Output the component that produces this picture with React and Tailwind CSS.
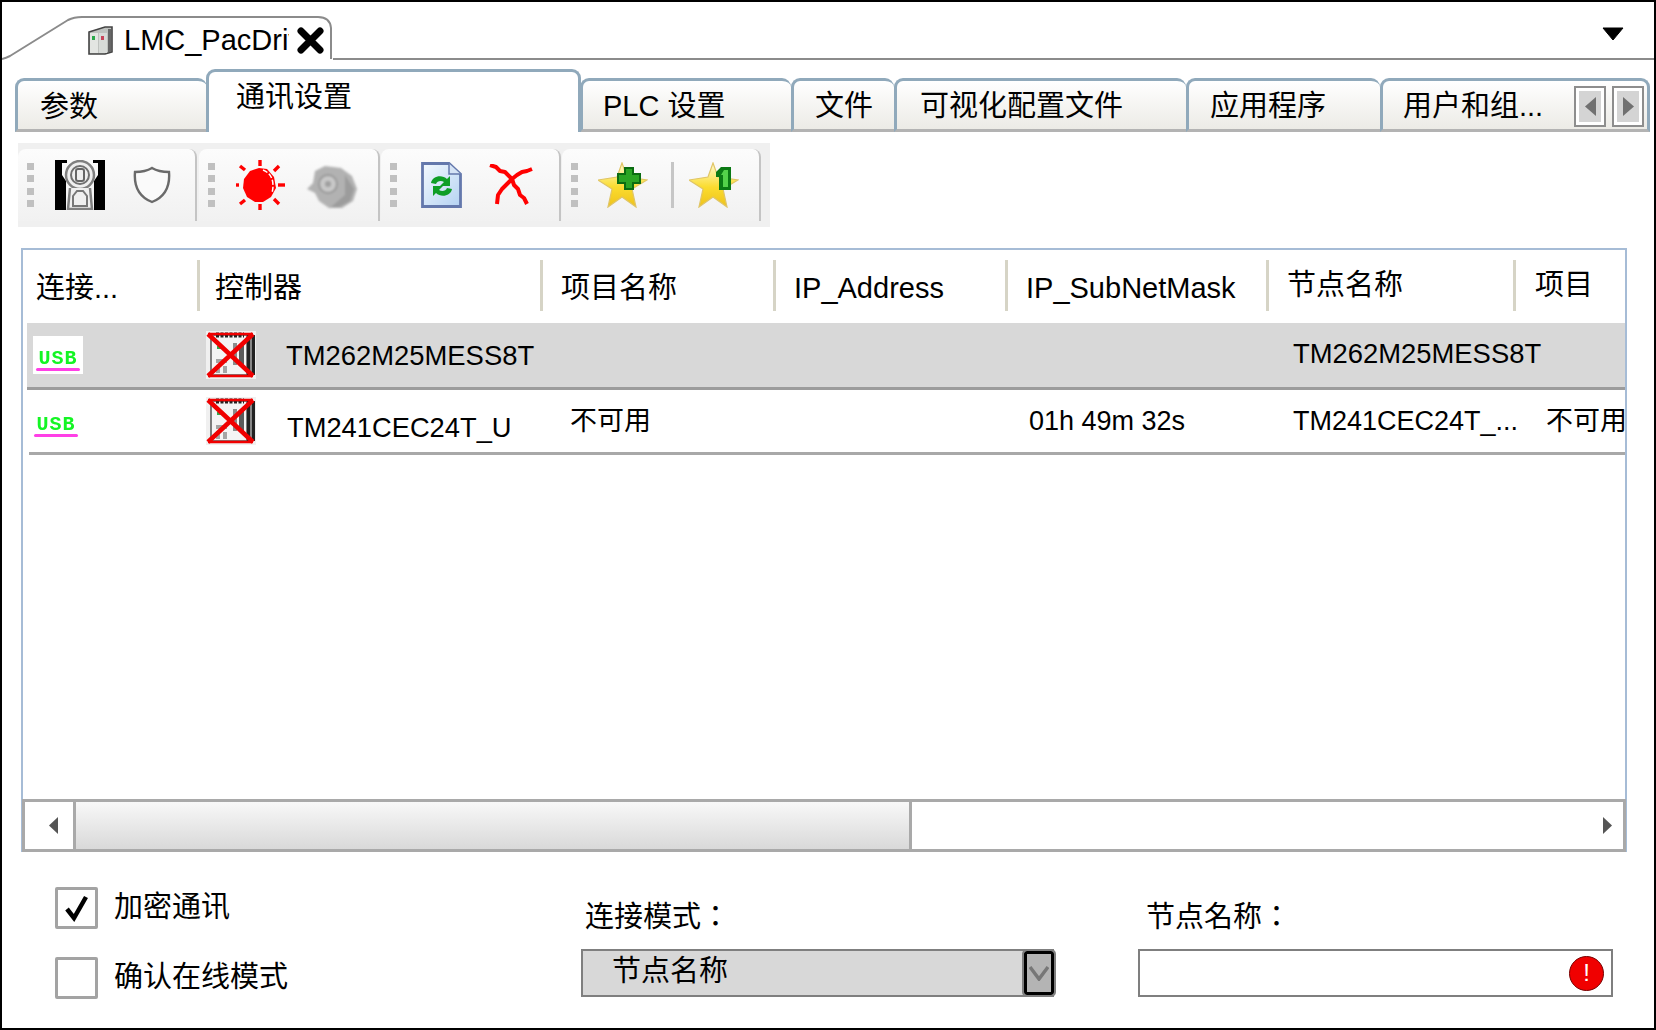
function DocTabIcon() {
  return (
    <svg width="26" height="29" viewBox="0 0 26 29" className="shrink-0 blur-[0.5px]">
      <path d="M2 6 L18 1 H25 V26 L18 28 H2 Z" fill="#bfc2bf" stroke="#444" strokeWidth="1.6" />
      <rect x="3" y="7" width="8" height="20" fill="#e3e5e2" />
      <rect x="12" y="7" width="8" height="20" fill="#d8dbd8" />
      <rect x="21" y="3" width="3" height="23" fill="#666" />
      <rect x="5" y="10" width="3" height="4" fill="#2aa84a" />
      <rect x="14" y="10" width="3" height="4" fill="#c8445a" />
    </svg>
  );
}

function CertIcon() {
  return (
    <svg width="50" height="50" viewBox="0 0 50 50" className="shrink-0 blur-[0.5px]">
      <path d="M0 0 H12 V3 H7 V15 L11 21 V50 H0 Z" fill="#000" />
      <path d="M50 0 H38 V3 H43 V15 L39 21 V50 H50 Z" fill="#000" />
      <circle cx="25" cy="15" r="14" fill="#efefef" stroke="#808080" strokeWidth="2.5" />
      <circle cx="25" cy="15" r="9" fill="none" stroke="#707070" strokeWidth="2" />
      <rect x="21" y="9" width="8" height="12" rx="2" fill="none" stroke="#666" strokeWidth="2" />
      <path d="M15 28 L13 49 H37 L35 28" fill="#efefef" stroke="#808080" strokeWidth="2.5" />
      <path d="M18 36 L22 31 H28 L32 36 V46 H18 Z" fill="none" stroke="#777" strokeWidth="2" />
    </svg>
  );
}

function ShieldIcon() {
  return (
    <svg width="38" height="38" viewBox="0 0 38 38" className="shrink-0 blur-[0.5px]">
      <path
        d="M19 2 C24 5 30 6 36 6 C37 18 34 30 19 36 C4 30 1 18 2 6 C8 6 14 5 19 2 Z"
        fill="#fafafa"
        stroke="#6a6a6a"
        strokeWidth="2.4"
      />
    </svg>
  );
}

function SunIcon() {
  const rays = [
    [25, 0, 25, 6],
    [25, 44, 25, 50],
    [1, 25, 4, 25],
    [43, 25, 50, 25],
    [5, 6, 10, 10],
    [44, 6, 39, 11],
    [5, 44, 10, 40],
    [44, 44, 39, 39],
  ];
  return (
    <svg width="50" height="50" viewBox="0 0 50 50" className="shrink-0 blur-[0.4px]">
      {rays.map((r, i) => (
        <line key={i} x1={r[0]} y1={r[1]} x2={r[2]} y2={r[3]} stroke="#ff0000" strokeWidth="3.4" />
      ))}
      <path d="M24 8 L32 9 L39 17 L41 28 L36 37 L28 42 L20 42 L12 37 L8 28 L9 19 L15 11 Z" fill="#ff0000" />
      <path d="M28 10 C36 13 40 21 37 33" fill="none" stroke="#fff" strokeWidth="1.5" strokeDasharray="5 2" />
    </svg>
  );
}

function GearIcon() {
  return (
    <svg width="50" height="44" viewBox="0 0 50 44" className="shrink-0 blur-[1px]">
      <path d="M0 24 L6 18 L8 6 L18 1 L34 3 L45 11 L50 24 L46 36 L35 43 L22 43 L12 36 L8 28 Z" fill="#b2b2b2" />
      <path d="M38 10 L47 24 L43 36 L32 42 L24 42 L38 30 Z" fill="#9c9c9c" />
      <circle cx="21" cy="19" r="9" fill="#c8c8c8" stroke="#9a9a9a" strokeWidth="2" />
      <circle cx="21" cy="19" r="3" fill="#a0a0a0" />
    </svg>
  );
}

function RefreshDocIcon() {
  return (
    <svg width="41" height="46" viewBox="0 0 41 46" className="shrink-0 blur-[0.5px]">
      <defs>
        <linearGradient id="docfill" x1="0" y1="0" x2="1" y2="1">
          <stop offset="0" stopColor="#f4f9fe" />
          <stop offset="1" stopColor="#b4d2f2" />
        </linearGradient>
      </defs>
      <path d="M1.5 1.5 H28 L39.5 12 V44.5 H1.5 Z" fill="url(#docfill)" stroke="#6478ac" strokeWidth="2.8" />
      <path d="M28 1.5 V12 H39.5" fill="#d5e3f5" stroke="#6478ac" strokeWidth="1.5" />
      <path d="M10 21 C11 14 21 12 26 17 L29 14 V24 H19 L23 20 C20 18 16 19 15 22 Z" fill="#0f9e26" />
      <path d="M31 27 C30 34 20 36 15 31 L12 34 V24 H22 L18 28 C21 30 25 29 26 26 Z" fill="#0f9e26" />
    </svg>
  );
}

function RedCrossIcon() {
  return (
    <svg width="44" height="42" viewBox="0 0 44 42" className="shrink-0 blur-[0.3px]">
      <path
        d="M1 1 L7 3 L11 7 L16 8 L23 15 L28 11 L33 8 L38 7 L43 5 M23 15 L25 21 L29 25 L31 31 L35 34 L38 40 M23 15 L18 20 L13 25 L9 31 L8 40"
        fill="none"
        stroke="#ff0000"
        strokeWidth="4"
        strokeLinejoin="round"
      />
    </svg>
  );
}

function StarIcon({ id, badge }) {
  return (
    <svg width="50" height="46" viewBox="0 0 50 46" className="shrink-0 blur-[0.6px]">
      <defs>
        <linearGradient id={id} x1="0" y1="0" x2="0" y2="1">
          <stop offset="0" stopColor="#fffbd6" />
          <stop offset="0.55" stopColor="#fbdc2e" />
          <stop offset="1" stopColor="#eec21c" />
        </linearGradient>
      </defs>
      <path
        d="M24 1 L29 15 L49 18 L34 27 L38 45 L24 35 L10 45 L14 27 L0 18 L19 15 Z"
        fill={`url(#${id})`}
        stroke="#e0c566"
        strokeWidth="1.2"
      />
      {badge === "plus" ? (
        <path
          d="M27 6 H35 V12 H42 V21 H35 V27 H27 V21 H20 V12 H27 Z"
          fill="#2aa524"
          stroke="#0b6c12"
          strokeWidth="2"
        />
      ) : (
        <g>
          <path d="M32 5 H42 V28 H30 V15 H27 V10 Z" fill="#0b7a14" />
          <path d="M35 8 H39 V25 H34 V13 H32 Z" fill="#54d24a" />
        </g>
      )}
    </svg>
  );
}

function Grip() {
  return (
    <div className="flex flex-col gap-[5.5px] shrink-0">
      <span className="block w-[7px] h-[7px] bg-[#c0c0c0]" />
      <span className="block w-[7px] h-[7px] bg-[#c0c0c0]" />
      <span className="block w-[7px] h-[7px] bg-[#c0c0c0]" />
      <span className="block w-[7px] h-[7px] bg-[#c0c0c0]" />
    </div>
  );
}

function UsbIcon({ boxed }) {
  return (
    <div className={boxed ? "w-[50px] h-[38px] bg-white flex flex-col items-center justify-end pb-[3px]" : "w-[50px] h-[38px] flex flex-col items-center justify-end pb-[3px]"}>
      <span className="[font-family:'Liberation_Mono',monospace] text-[20px] leading-[15px] font-bold text-[#14f524] tracking-[1px] blur-[0.3px]">
        USB
      </span>
      <span className="block w-[44px] h-[3px] mt-[2px] bg-[#ff3fe6] rounded-full" />
    </div>
  );
}

function PlcIcon() {
  return (
    <svg width="50" height="48" viewBox="0 0 50 48" className="shrink-0 blur-[0.5px]">
      <rect width="50" height="48" fill="#f0f0f0" />
      <rect x="5" y="4" width="36" height="40" fill="#f4f4f4" stroke="#555" strokeWidth="1.5" />
      <path d="M10 4 H38" stroke="#222" strokeWidth="5" strokeDasharray="3 1.5" />
      <rect x="41" y="4" width="3" height="40" fill="#222" />
      <rect x="44" y="4" width="2" height="40" fill="#888" />
      <rect x="46" y="4" width="3" height="40" fill="#222" />
      <rect x="11" y="15" width="6" height="3" fill="#35a84f" />
      <rect x="27" y="12" width="4" height="22" fill="#8c8c8c" />
      <rect x="33" y="14" width="5" height="20" fill="#5a5a5a" />
      <rect x="10" y="28" width="11" height="4" fill="#a5a5a5" />
      <rect x="10" y="35" width="4" height="7" fill="#a5a5a5" />
      <rect x="17" y="35" width="4" height="7" fill="#a5a5a5" />
      <path d="M2 3 L47 45 M2 45 L47 3" stroke="#f00000" strokeWidth="4.5" />
      <path d="M2 3 H47 M2 45 H47" stroke="#f00000" strokeWidth="2.5" />
    </svg>
  );
}

function Triangle({ dir, color, small }) {
  return (
    <svg width={small ? 9 : 11} height={small ? 17 : 19} viewBox="0 0 11 19" preserveAspectRatio="none">
      <path d={dir === "left" ? "M11 0 V19 L0 9.5 Z" : "M0 0 V19 L11 9.5 Z"} fill={color} />
    </svg>
  );
}

function Tab({ className, children }) {
  return (
    <div
      className={`h-[54px] shrink-0 flex items-center border-t-[3px] border-l-[3px] border-[#90a9bb] border-b-[3px] border-b-[#b3b3b3] rounded-t-[9px] bg-gradient-to-b from-white to-[#ecebe6] text-[29px] text-black whitespace-nowrap ${className}`}
    >
      {children}
    </div>
  );
}

export default function App() {
  return (
    <div className="[font-family:'Liberation_Sans','Noto_Sans_CJK_SC',sans-serif] w-[1656px] h-[1030px] box-border border-2 border-black bg-white flex flex-col overflow-hidden">
      {/* document tab strip */}
      <div className="flex h-[58px] shrink-0">
        <div className="relative w-[331px] h-[58px] shrink-0">
          <svg width="331" height="58" viewBox="0 0 331 58" className="absolute inset-0">
            <path
              d="M0 57 Q4 56 8 54 L66 18 Q72 15 80 15 H316 Q328 15 329 26 V57"
              fill="none"
              stroke="#8b8b8b"
              strokeWidth="2"
            />
          </svg>
          <div className="relative flex items-center h-full pl-[85px] pt-[18px]">
            <DocTabIcon />
            <span className="ml-[11px] w-[165px] overflow-hidden whitespace-nowrap text-[29px] leading-[34px]">LMC_PacDriver</span>
            <svg width="27" height="27" viewBox="0 0 27 27" className="ml-[8px] shrink-0">
              <path d="M4 4 L23 23 M23 4 L4 23" stroke="#000" strokeWidth="7" strokeLinecap="round" />
            </svg>
          </div>
        </div>
        <div className="flex-1 flex justify-end border-b-2 border-[#8b8b8b] pt-[25px] pr-[30px]">
          <svg width="22" height="14" viewBox="0 0 22 14">
            <path d="M1 1 H21 L11 13 Z" fill="#000" stroke="#000" strokeLinejoin="round" />
          </svg>
        </div>
      </div>

      {/* property tabs */}
      <div className="flex items-end ml-[13px] mt-[9px] h-[63px] shrink-0">
        <Tab className="w-[192px] pl-[22px] pt-[6px]">参数</Tab>
        <div className="relative z-10 -mx-[1px] w-[375px] h-[63px] shrink-0 border-t-[3px] border-x-[3px] border-[#90a9bb] rounded-t-[9px] bg-white pl-[27px] pt-[5px] text-[29px] leading-[40px]">
          通讯设置
        </div>
        <Tab className="w-[211px] pl-[20px] pt-[4px]">PLC 设置</Tab>
        <Tab className="w-[103px] pl-[21px] pt-[4px]">文件</Tab>
        <Tab className="w-[292px] pl-[23px] pt-[4px]">可视化配置文件</Tab>
        <Tab className="w-[194px] pl-[21px] pt-[4px]">应用程序</Tab>
        <Tab className="w-[270px] pl-[20px] pt-[2px] border-r-[3px]">
          <span className="pt-[2px]">用户和组...</span>
          <div className="ml-auto mr-[3px] flex gap-[6px]">
            <div className="w-[32px] h-[41px] border-2 border-[#8d8d8d] bg-white p-[3px]">
              <div className="w-full h-full bg-[#d4d4d4] flex items-center justify-center">
                <Triangle dir="left" color="#707070" />
              </div>
            </div>
            <div className="w-[32px] h-[41px] border-2 border-[#8d8d8d] bg-white p-[3px]">
              <div className="w-full h-full bg-[#d4d4d4] flex items-center justify-center">
                <Triangle dir="right" color="#707070" />
              </div>
            </div>
          </div>
        </Tab>
      </div>

      {/* toolbar */}
      <div className="flex ml-[16px] mt-[11px] w-[752px] h-[84px] shrink-0 bg-[#f0f0f0] pt-[6px] pb-[6px]">
        <div className="w-[179px] shrink-0 rounded-t-lg bg-gradient-to-b from-[#fcfcfc] to-[#f1f1f1] border-r-2 border-r-[#c4c4c4] flex items-center pl-[9px]">
          <Grip />
          <div className="ml-[21px]"><CertIcon /></div>
          <div className="ml-[28px]"><ShieldIcon /></div>
        </div>
        <div className="w-[181px] shrink-0 rounded-t-lg bg-gradient-to-b from-[#fcfcfc] to-[#f1f1f1] border-r-2 border-r-[#c4c4c4] flex items-center pl-[9px] ml-[2px]">
          <Grip />
          <div className="ml-[20px]"><SunIcon /></div>
          <div className="ml-[22px] mt-[4px]"><GearIcon /></div>
        </div>
        <div className="w-[180px] shrink-0 rounded-t-lg bg-gradient-to-b from-[#fcfcfc] to-[#f1f1f1] border-r-2 border-r-[#c4c4c4] flex items-center pl-[9px] ml-[1px]">
          <Grip />
          <div className="ml-[24px]"><RefreshDocIcon /></div>
          <div className="ml-[27px]"><RedCrossIcon /></div>
        </div>
        <div className="w-[199px] shrink-0 rounded-t-lg bg-gradient-to-b from-[#fcfcfc] to-[#f1f1f1] border-r-2 border-r-[#c4c4c4] flex items-center pl-[9px] ml-[1px]">
          <Grip />
          <div className="ml-[20px]"><StarIcon id="star-a" badge="plus" /></div>
          <span className="block ml-[23px] w-[3px] h-[46px] bg-[#c6c6c6]" />
          <div className="ml-[15px]"><StarIcon id="star-b" badge="one" /></div>
        </div>
      </div>

      {/* device table */}
      <div className="flex flex-col ml-[19px] mt-[21px] w-[1606px] h-[604px] shrink-0 border-2 border-[#a6bcd6] text-[29px]">
        <div className="flex shrink-0 h-[73px] pt-[10px]">
          <div className="w-[174px] h-[51px] flex items-center pl-[13px] pt-[6px]">连接...</div>
          <div className="w-[343px] h-[51px] flex items-center pl-[15px] pt-[6px] border-l-[3px] border-[#d6d4c6]">控制器</div>
          <div className="w-[233px] h-[51px] flex items-center pl-[18px] pt-[6px] border-l-[3px] border-[#d6d4c6]">项目名称</div>
          <div className="w-[232px] h-[51px] flex items-center pl-[18px] pt-[6px] border-l-[3px] border-[#d6d4c6]">IP_Address</div>
          <div className="w-[261px] h-[51px] flex items-center pl-[18px] pt-[6px] border-l-[3px] border-[#d6d4c6]">IP_SubNetMask</div>
          <div className="w-[247px] h-[51px] flex items-center pl-[18px] border-l-[3px] border-[#d6d4c6]">节点名称</div>
          <div className="w-[111px] h-[51px] flex items-center pl-[19px] border-l-[3px] border-[#d6d4c6] whitespace-nowrap">项目</div>
        </div>

        <div className="flex items-center shrink-0 h-[67px] ml-[4px] bg-[#d8d8d8] border-b-[3px] border-[#9c9c9c] text-[27.4px] whitespace-nowrap">
          <div className="w-[179px] shrink-0 pl-[6px]"><UsbIcon boxed /></div>
          <PlcIcon />
          <span className="ml-[30px] w-[1007px] shrink-0 pt-[2px]">TM262M25MESS8T</span>
          <span className="pb-[2px]">TM262M25MESS8T</span>
        </div>

        <div className="flex items-center shrink-0 h-[65px] ml-[6px] border-b-[3px] border-[#a8a8a8] text-[27px] whitespace-nowrap overflow-hidden">
          <div className="w-[177px] shrink-0 pl-[2px]"><UsbIcon /></div>
          <PlcIcon />
          <span className="ml-[31px] w-[283px] shrink-0 pt-[14px] text-[27.3px]">TM241CEC24T_U</span>
          <span className="w-[459px] shrink-0">不可用</span>
          <span className="w-[264px] shrink-0">01h 49m 32s</span>
          <span className="w-[253px] shrink-0">TM241CEC24T_...</span>
          <span>不可用</span>
        </div>

        {/* horizontal scrollbar */}
        <div className="mt-auto flex h-[53px] shrink-0 border-[3px] border-[#a9a9a9] -mb-[2px] -ml-[1px] -mr-[1px]">
          <div className="w-[48px] shrink-0 flex items-center justify-center bg-white pl-[8px]">
            <Triangle dir="left" color="#555" small />
          </div>
          <div className="w-[839px] shrink-0 border-x-[3px] border-[#a9a9a9] bg-gradient-to-b from-[#f8f8f8] to-[#d9d9d9]" />
          <div className="flex-1 flex items-center justify-end pr-[11px]">
            <Triangle dir="right" color="#555" small />
          </div>
        </div>
      </div>

      {/* bottom options */}
      <div className="flex flex-1 text-[29px]">
        <div className="w-[576px] shrink-0 pl-[53px] pt-[35px] flex flex-col gap-[28px]">
          <div className="flex items-center h-[42px]">
            <div className="w-[43px] h-[42px] shrink-0 border-[3px] border-[#a3a3a3] rounded-[2px] flex items-center justify-center">
              <svg width="26" height="28" viewBox="0 0 26 28">
                <path d="M3 15 L10 24 L22 3" fill="none" stroke="#000" strokeWidth="4.5" />
              </svg>
            </div>
            <span className="ml-[16px]">加密通讯</span>
          </div>
          <div className="flex items-center h-[42px]">
            <div className="w-[43px] h-[42px] shrink-0 border-[3px] border-[#a3a3a3] rounded-[2px]" />
            <span className="ml-[16px]">确认在线模式</span>
          </div>
        </div>

        <div className="w-[560px] shrink-0 pl-[3px] pt-[46px]">
          <div className="[font-family:'Liberation_Sans','Noto_Sans_CJK_TC',sans-serif] h-[51px] pl-[4px] leading-[38px]">连接模式：</div>
          <div className="flex w-[473px] h-[48px] border-y-2 border-l-2 border-[#7f7f7f] bg-[#d8d8d8]">
            <span className="flex-1 pl-[29px] pb-[2px] flex items-center">节点名称</span>
            <div className="w-[30px] shrink-0 border-[3px] border-black rounded-[3px] bg-[#b4b4b4] flex items-center justify-center outline-2 outline-[#7f7f7f]">
              <svg width="20" height="16" viewBox="0 0 20 16">
                <path d="M1 2 L10 14 L19 2" fill="none" stroke="#777" strokeWidth="3.5" />
              </svg>
            </div>
          </div>
        </div>

        <div className="flex-1 pt-[46px]">
          <div className="[font-family:'Liberation_Sans','Noto_Sans_CJK_TC',sans-serif] h-[51px] pl-[8px] leading-[38px]">节点名称：</div>
          <div className="flex items-center justify-end w-[475px] h-[48px] border-2 border-[#7f7f7f] pr-[7px]">
            <div className="w-[35px] h-[35px] rounded-full bg-[#f00000] border border-[#700] flex items-center justify-center text-white text-[24px] leading-none">
              !
            </div>
          </div>
        </div>
      </div>
    </div>
  );
}
